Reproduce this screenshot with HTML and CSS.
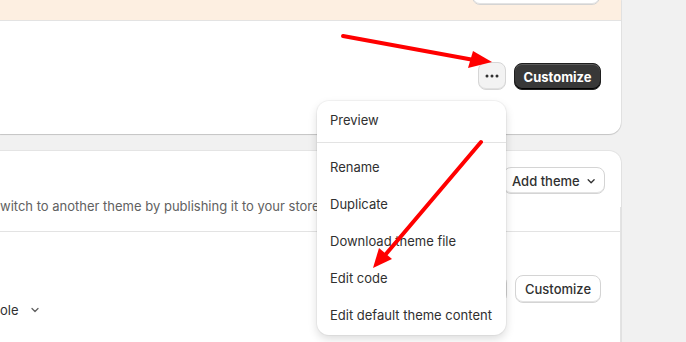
FILE: index.html
```html
<!DOCTYPE html>
<html lang="en">
<head>
    <meta charset="UTF-8">
    <meta name="viewport" content="width=device-width, initial-scale=1.0">
    <title>Themes</title>
    <link rel="stylesheet" href="styles.css">
</head>
<body>
    <div class="page">
        <div class="card current-theme">
            <div class="banner">
                <div class="banner-row">
                    <span class="banner-text">A newer version of this theme is available for updating</span>
                    <button class="btn btn-plain banner-btn">View update</button>
                </div>
            </div>
            <div class="card-actions">
                <button class="btn btn-dots" aria-label="More actions">
                    <svg width="14" height="4" viewBox="0 0 14 4"><circle cx="2" cy="2" r="1.5"/><circle cx="7" cy="2" r="1.5"/><circle cx="12" cy="2" r="1.5"/></svg>
                </button>
                <button class="btn btn-dark">Customize</button>
            </div>
        </div>

        <div class="card library">
            <div class="library-head">
                <div class="head-row">
                    <button class="btn btn-plain add-btn">Add theme
                        <svg width="12" height="12" viewBox="0 0 12 12"><path d="M2.5 4.5 6 8l3.5-3.5" fill="none" stroke="#303030" stroke-width="1.5" stroke-linecap="round" stroke-linejoin="round"/></svg>
                    </button>
                </div>
                <p class="library-desc">witch to another theme by publishing it to your store.</p>
            </div>
            <div class="theme-row">
                <div class="theme-info">
                    <span class="theme-meta">ole
                        <svg width="12" height="12" viewBox="0 0 12 12"><path d="M3 4.5 6 7.5l3-3" fill="none" stroke="#616161" stroke-width="1.3" stroke-linecap="round" stroke-linejoin="round"/></svg>
                    </span>
                </div>
                <div class="row-actions">
                    <button class="btn btn-plain btn-dots-light" aria-label="More actions">···</button>
                    <button class="btn btn-plain">Customize</button>
                </div>
            </div>
        </div>
    </div>

    <div class="menu">
        <div class="menu-section first">
            <div class="menu-item">Preview</div>
        </div>
        <div class="menu-section">
            <div class="menu-item">Rename</div>
            <div class="menu-item">Duplicate</div>
            <div class="menu-item">Download theme file</div>
            <div class="menu-item">Edit code</div>
            <div class="menu-item">Edit default theme content</div>
        </div>
    </div>

    <svg class="arrows" width="686" height="342" viewBox="0 0 686 342">
        <line x1="343" y1="36" x2="474" y2="60" stroke="#ff0000" stroke-width="4" stroke-linecap="round"/>
        <polygon points="492,62 473,51 468,68" fill="#ff0000"/>
        <line x1="481" y1="142" x2="386" y2="254" stroke="#ff0000" stroke-width="4" stroke-linecap="round"/>
        <polygon points="373,268 379,248 392,259" fill="#ff0000"/>
    </svg>
</body>
</html>
```

FILE: styles.css
```css
body {
    margin: 0;
    background: #f1f1f1;
    font-family: Inter, "Noto Sans", sans-serif;
    font-size: 13px;
    color: #303030;
    width: 686px;
    height: 342px;
    overflow: hidden;
    position: relative;
}
.page {
    width: 621px;
}
.card {
    background: #fff;
    box-shadow: 0 1px 1px rgba(0, 0, 0, 0.14), 0 0 0 1px rgba(0, 0, 0, 0.05);
}
.current-theme {
    height: 134px;
    border-radius: 0 0 12px 0;
}
.banner {
    height: 20px;
    background: #fdefe1;
    border-bottom: 1px solid #e3e3e3;
    overflow: hidden;
}
.banner-row {
    display: flex;
    align-items: center;
    justify-content: flex-end;
    margin-top: -22px;
    padding-right: 21px;
    gap: 65px;
}
.banner-text {
    white-space: nowrap;
}
.banner-btn {
    width: 128px;
    height: 29px;
}
.card-actions {
    display: flex;
    justify-content: flex-end;
    gap: 8px;
    padding: 42px 20px 0 0;
}
.btn {
    font-family: inherit;
    font-size: 13px;
    font-weight: 600;
    border-radius: 8px;
    height: 27px;
    padding: 0 12px;
    display: flex;
    align-items: center;
    gap: 6px;
    white-space: nowrap;
    cursor: pointer;
}
.btn-dots {
    width: 28px;
    height: 28px;
    margin-top: -1px;
    padding: 0;
    justify-content: center;
    background: #f3f3f3;
    border: 1px solid #d6d6d6;
    box-shadow: inset 0 -1px 0 #e0e0e0;
}
.btn-dots svg {
    fill: #303030;
}
.btn-dark {
    width: 87px;
    justify-content: center;
    background: #383838;
    color: #fff;
    font-weight: 700;
    border: 1px solid #1f1f1f;
    box-shadow: inset 0 1px 0 rgba(255, 255, 255, 0.18), inset 0 -1px 0 #000;
}
.btn-plain {
    background: #fff;
    color: #303030;
    border: 1px solid #d4d4d4;
    box-shadow: inset 0 -1px 0 #e3e3e3;
}
.library {
    margin-top: 17px;
    height: 191px;
    border-radius: 0 12px 0 0;
    position: relative;
}
.library::after {
    content: "";
    position: absolute;
    right: 0;
    top: 56px;
    bottom: 0;
    width: 1px;
    background: #e3e3e3;
}
.library-head {
    padding: 16px 16px 0 0;
    height: 64px;
    border-bottom: 1px solid #e3e3e3;
}
.head-row {
    display: flex;
    justify-content: flex-end;
}
.add-btn {
    width: 102px;
    justify-content: center;
    padding: 0 8px;
    font-weight: 500;
}
.library-desc {
    margin: 2px 0 0;
    line-height: 20px;
    color: #616161;
    white-space: nowrap;
}
.theme-row {
    display: flex;
    justify-content: space-between;
    padding-right: 20px;
}
.theme-info {
    padding-top: 68px;
}
.theme-meta {
    display: flex;
    align-items: center;
    gap: 10px;
    line-height: 20px;
    color: #303030;
}
.row-actions {
    display: flex;
    gap: 8px;
    padding-top: 43px;
}
.row-actions .btn {
    height: 28px;
}
.row-actions .btn-plain:last-child {
    width: 86px;
    justify-content: center;
    font-weight: 500;
}
.btn-dots-light {
    width: 28px;
    padding: 0;
    justify-content: center;
}
.menu {
    position: absolute;
    left: 317px;
    top: 101px;
    width: 189px;
    background: #fff;
    border-radius: 12px;
    box-shadow: 0 4px 10px rgba(0, 0, 0, 0.14), 0 0 0 1px rgba(0, 0, 0, 0.04);
}
.menu-section {
    padding: 6px 0 1px;
}
.menu-section.first {
    padding: 1px 0 3px;
    border-bottom: 1px solid #e3e3e3;
}
.menu-item {
    height: 37px;
    line-height: 37px;
    padding-left: 13px;
    white-space: nowrap;
}
.arrows {
    position: absolute;
    left: 0;
    top: 0;
    pointer-events: none;
}
```
